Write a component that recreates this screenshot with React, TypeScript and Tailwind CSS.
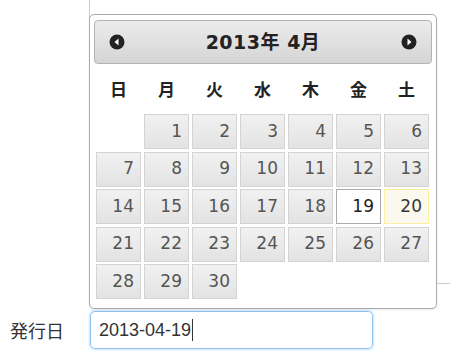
import React from 'react';

const weekdays = ['日', '月', '火', '水', '木', '金', '土'];

// April 2013 starts on Monday
const days: (number | null)[] = [null, ...Array.from({ length: 30 }, (_, i) => i + 1)];

const CircleArrow: React.FC<{ dir: 'left' | 'right' }> = ({ dir }) => (
  <svg width="16" height="16" viewBox="0 0 16 16">
    <circle cx="8" cy="8" r="7.5" fill="#222" />
    {dir === 'left' ? (
      <polygon points="9.5,4.5 9.5,11.5 5.5,8" fill="#fff" />
    ) : (
      <polygon points="6.5,4.5 6.5,11.5 10.5,8" fill="#fff" />
    )}
  </svg>
);

const DayCell: React.FC<{ day: number }> = ({ day }) => {
  let cls = 'border-[#d3d3d3] bg-gradient-to-b from-[#f1f1f1] to-[#e3e3e3] text-[#555]';
  if (day === 19) cls = 'border-[#aaaaaa] bg-white text-[#212121]';
  if (day === 20) cls = 'border-[#fcefa1] bg-[#fbf9ee] text-[#363636]';
  return (
    <div className={`h-[35px] border flex items-center justify-end pr-[6px] text-[17px] ${cls}`}>
      {day}
    </div>
  );
};

const App: React.FC = () => {
  return (
    <div className="relative w-[450px] h-[359px] bg-white overflow-hidden font-['DejaVu_Sans','Noto_Sans_CJK_JP',sans-serif]">
      {/* form frame behind the popup */}
      <div className="ml-[89px] h-[284px] border-l border-b border-[#cccccc]" />

      <div className="flex items-center mt-[27px]">
        <label className="w-[90px] pl-[10px] text-[18px] text-[#333] font-['Noto_Sans_CJK_JP',sans-serif]">
          発行日
        </label>
        <div className="w-[283px] h-[38px] border border-[#8fc3ef] rounded-[5px] shadow-[0_0_3px_rgba(82,168,236,0.6)] flex items-center pl-[8px] text-[18px] text-[#333] font-['Liberation_Sans',sans-serif]">
          2013-04-19
          <span className="w-px h-[22px] bg-[#333] ml-[1px]" />
        </div>
      </div>

      {/* datepicker popup */}
      <div className="absolute left-[89px] top-[14px] w-[348px] h-[295px] border border-[#aaaaaa] rounded-[5px] bg-white px-[4px] pt-[5px] shadow-[0_1px_2px_rgba(0,0,0,0.08)]">
        <div className="h-[44px] border border-[#b3b3b3] rounded-[4px] bg-gradient-to-b from-[#ececec] to-[#d5d5d5] flex items-center justify-between px-[14px]">
          <CircleArrow dir="left" />
          <span className="text-[19px] font-bold text-[#222] tracking-[0.5px]">2013年 4月</span>
          <CircleArrow dir="right" />
        </div>
        <div className="h-[50px] grid grid-cols-[repeat(7,45px)] gap-x-[3px] pl-[2px] items-center">
          {weekdays.map((w) => (
            <div key={w} className="text-center text-[17px] font-bold text-[#222] font-['Noto_Sans_CJK_JP',sans-serif]">
              {w}
            </div>
          ))}
        </div>
        <div className="grid grid-cols-[repeat(7,45px)] gap-x-[3px] gap-y-[2.5px] pl-[2px]">
          {days.map((d, i) => (d === null ? <div key={`e${i}`} /> : <DayCell key={d} day={d} />))}
        </div>
      </div>
    </div>
  );
};

export default App;
